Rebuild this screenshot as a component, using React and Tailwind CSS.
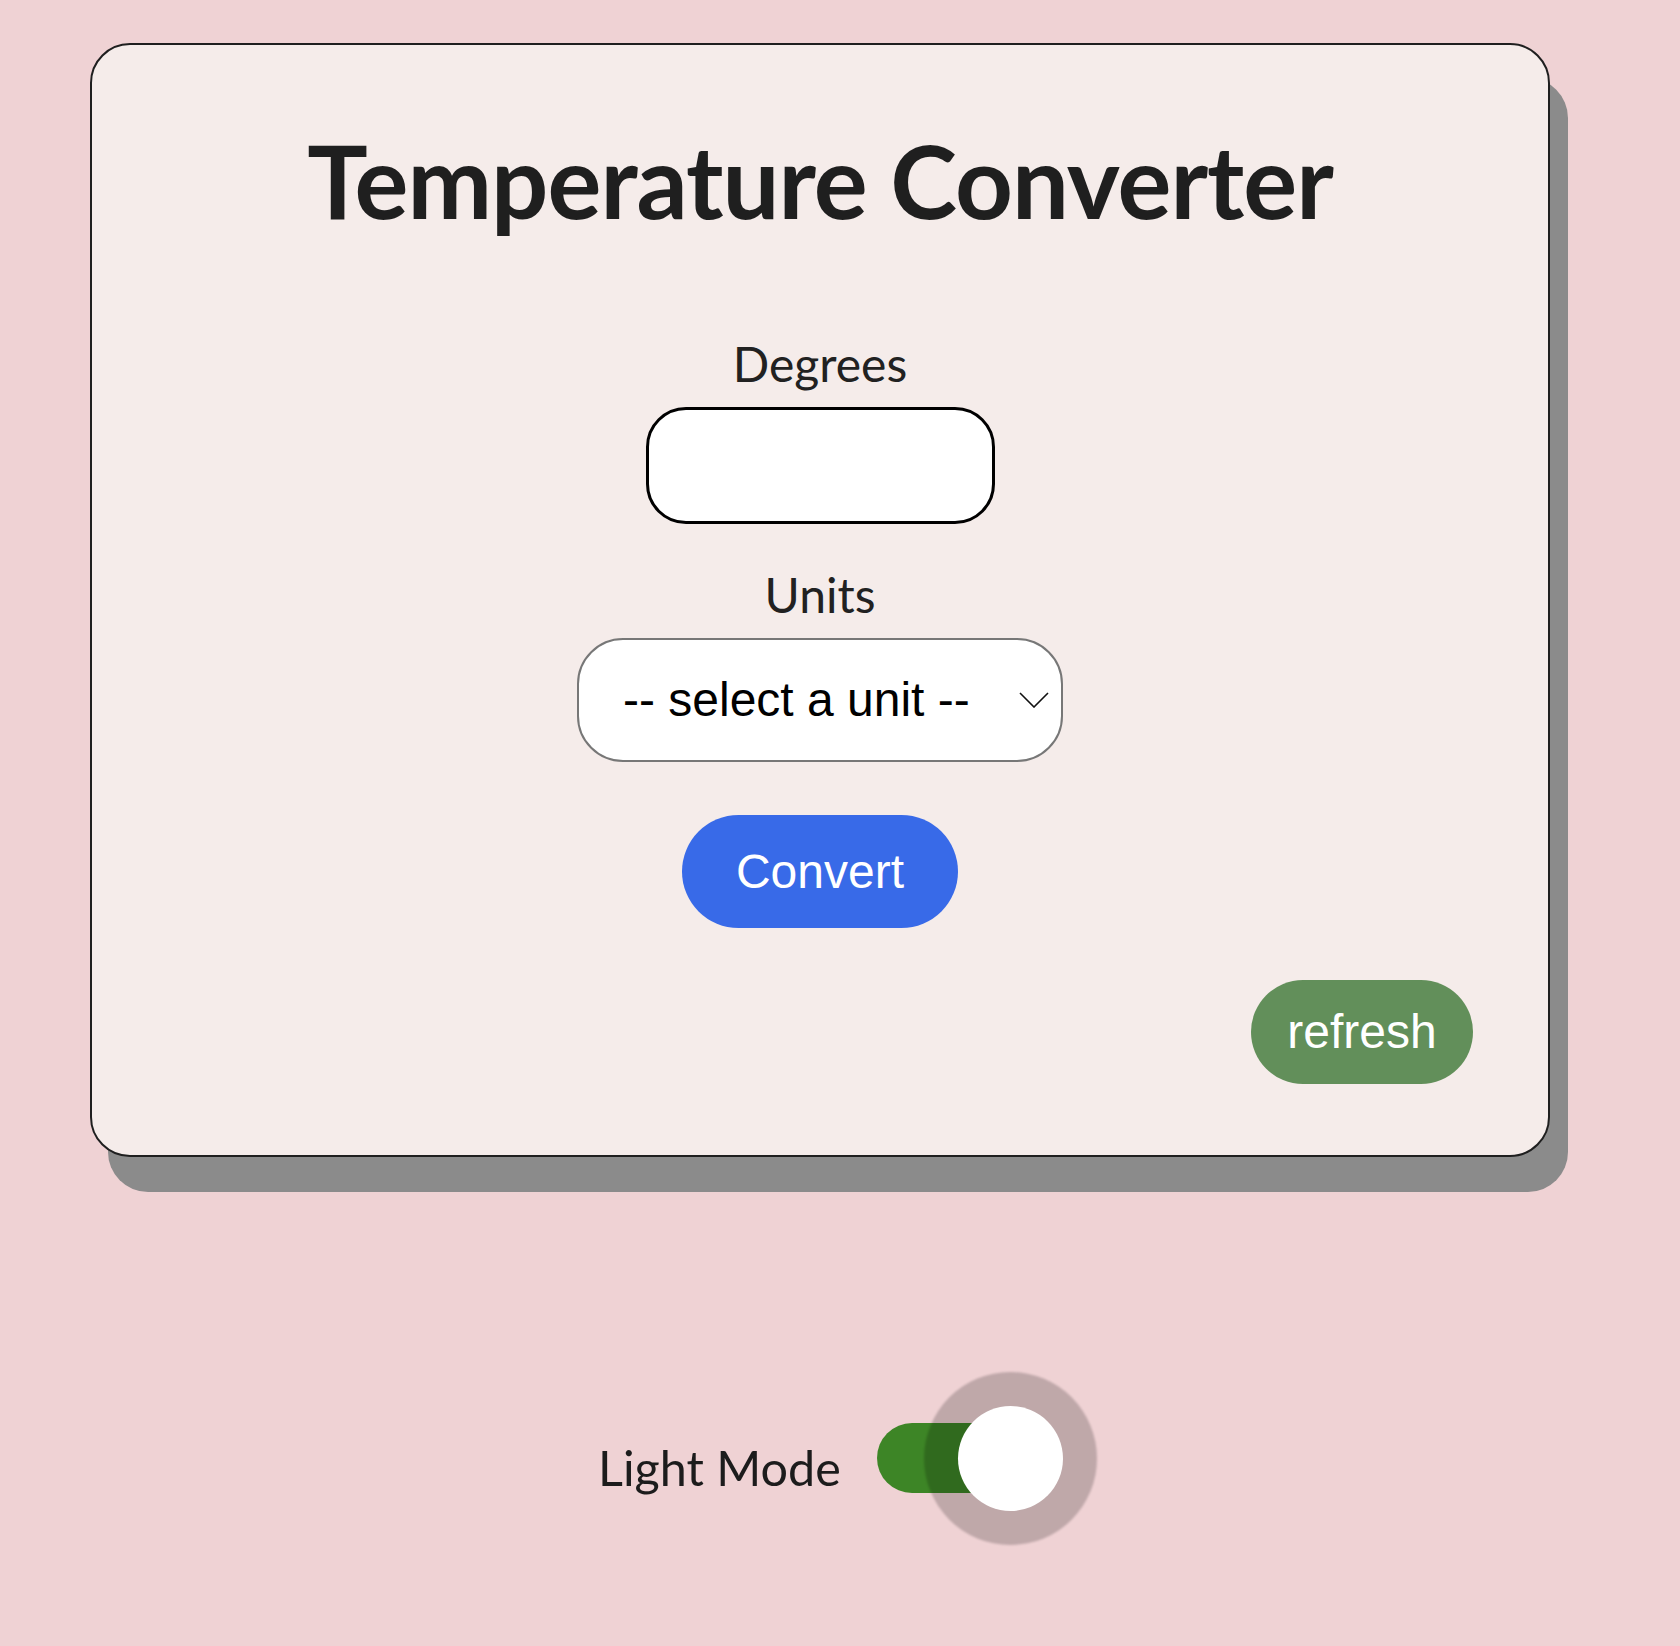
import React, { useState } from 'react';

const lato = { fontFamily: 'Lato, "Noto Sans", sans-serif' };
const arial = { fontFamily: '"Liberation Sans", Arial, sans-serif' };

function Toggle({ on, onChange }) {
  return (
    <button
      type="button"
      onClick={() => onChange(!on)}
      className="relative w-[186px] h-[105px] shrink-0"
      aria-pressed={on}
    >
      <span className="absolute left-0 top-[17px] w-[160px] h-[70px] rounded-full bg-[#3d8526]" />
      <span className="absolute right-[-34px] top-[-34px] w-[173px] h-[173px] rounded-full bg-black/20 blur-[1px]" />
      <span className="absolute right-0 top-0 w-[105px] h-[105px] rounded-full bg-white" />
    </button>
  );
}

export default function App() {
  const [degrees, setDegrees] = useState('');
  const [unit, setUnit] = useState('');
  const [light, setLight] = useState(true);

  return (
    <div className="min-h-[1646px] w-full bg-[#efd2d4] pt-[43px]" style={lato}>
      <div className="ml-[90px] w-[1460px] h-[1114px] rounded-[40px] border-2 border-[#1f1f1f] bg-[#f5ecea] shadow-[18px_35px_0_#8b8b8b] flex flex-col items-center">
        <h1 className="mt-[84px] text-[101px] leading-[102px] font-bold text-[#1f1f1f] tracking-[-1px]">
          Temperature Converter
        </h1>

        <label className="mt-[109px] text-[48px] leading-[48px] text-[#212121]">Degrees</label>
        <input
          type="text"
          value={degrees}
          onChange={(e) => setDegrees(e.target.value)}
          className="mt-[19px] w-[349px] h-[117px] rounded-[40px] border-[3px] border-black bg-white px-6 text-[40px] outline-none"
        />

        <label className="mt-[47px] text-[48px] leading-[48px] text-[#212121]">Units</label>
        <div className="relative mt-[19px] w-[486px] h-[124px]">
          <select
            value={unit}
            onChange={(e) => setUnit(e.target.value)}
            className="appearance-none w-full h-full rounded-[46px] border-2 border-[#777] bg-white pl-[44px] pr-[70px] text-[48px] text-black outline-none"
            style={arial}
          >
            <option value="">-- select a unit --</option>
            <option value="c">Celsius</option>
            <option value="f">Fahrenheit</option>
            <option value="k">Kelvin</option>
          </select>
          <svg
            className="pointer-events-none absolute right-[14px] top-[54px]"
            width="30"
            height="16"
            viewBox="0 0 30 16"
            fill="none"
            stroke="#111"
            strokeWidth="1.6"
          >
            <path d="M1 1 L15 15 L29 1" />
          </svg>
        </div>

        <button
          type="button"
          className="mt-[53px] w-[276px] h-[113px] rounded-full bg-[#386ae8] text-white text-[48px]"
          style={arial}
        >
          Convert
        </button>

        <div className="w-full flex justify-end pr-[75px] mt-[52px]">
          <button
            type="button"
            onClick={() => { setDegrees(''); setUnit(''); }}
            className="w-[222px] h-[104px] rounded-full bg-[#628f5a] text-white text-[48px]"
            style={arial}
          >
            refresh
          </button>
        </div>
      </div>

      <div className="mt-[249px] flex items-center pl-[598px]">
        <span className="text-[48.5px] leading-[48px] text-[#1c1c1c] pt-[16px] mr-[36px]">
          {light ? 'Light Mode' : 'Dark Mode'}
        </span>
        <Toggle on={light} onChange={setLight} />
      </div>
    </div>
  );
}
